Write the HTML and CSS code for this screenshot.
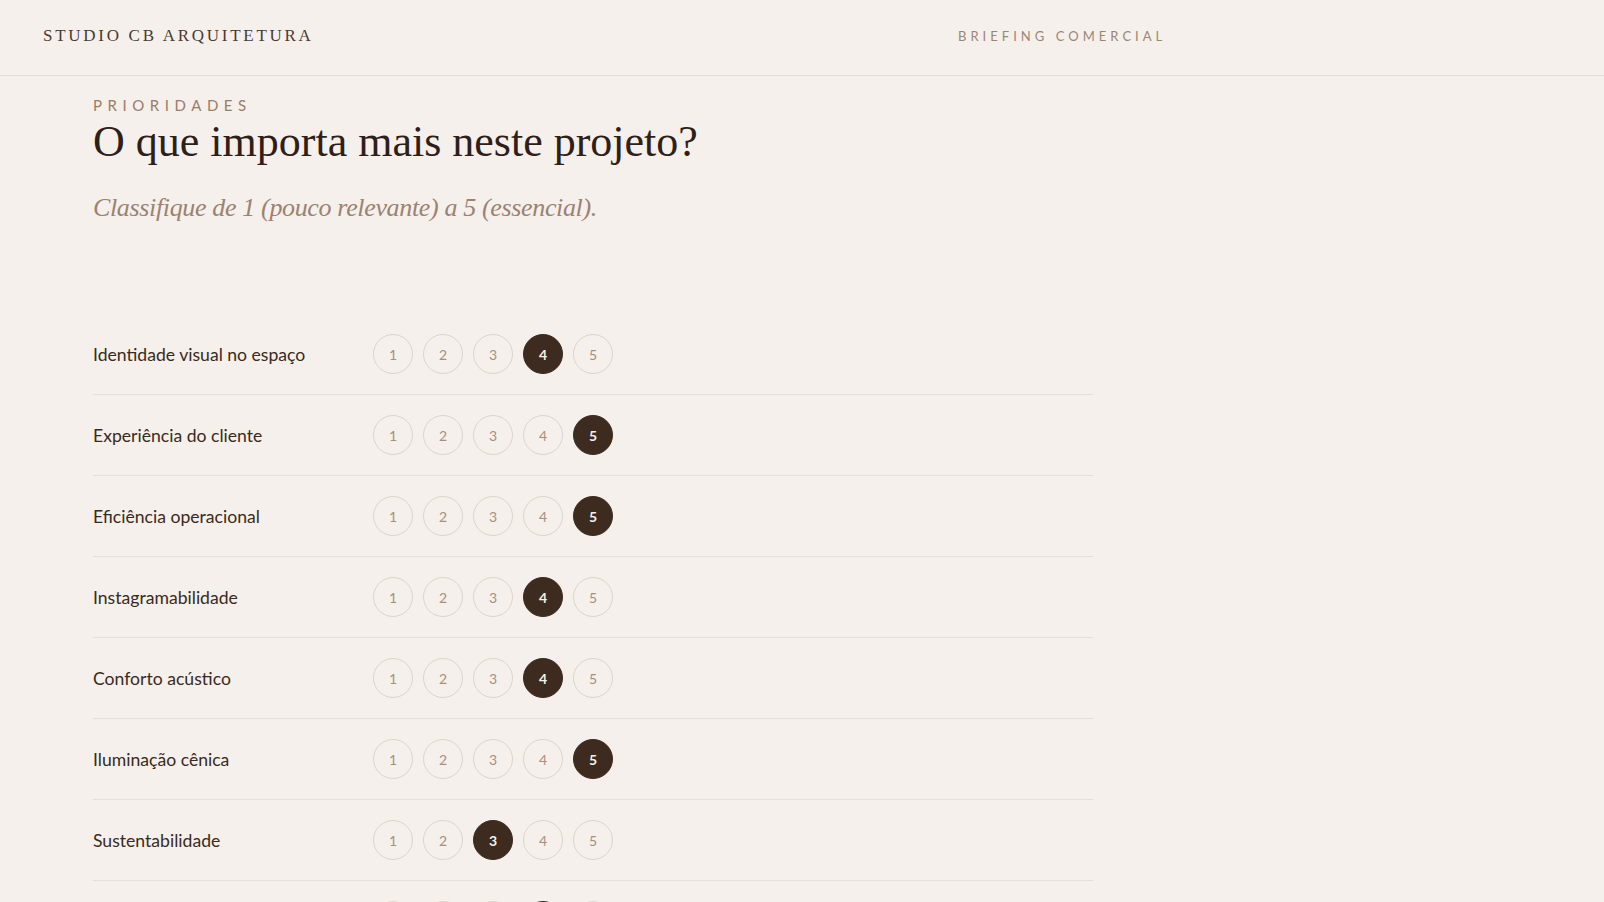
FILE: index.html
```html
<!DOCTYPE html>
<html lang="pt">
<head>
<meta charset="utf-8">
<title>Studio CB Arquitetura — Briefing</title>
<link rel="stylesheet" href="styles.css">
</head>
<body>
<header class="topbar">
  <div class="brand">STUDIO CB ARQUITETURA</div>
  <div class="doc-type">BRIEFING COMERCIAL</div>
  <div class="spacer"></div>
</header>
<main class="content">
  <section class="intro">
    <div class="eyebrow">PRIORIDADES</div>
    <h1 class="title">O que importa mais neste projeto?</h1>
    <p class="lead">Classifique de 1 (pouco relevante) a 5 (essencial).</p>
  </section>
  <section class="ratings">
    <div class="row"><span class="label">Identidade visual no espaço</span><div class="scale"><span class="dot">1</span><span class="dot">2</span><span class="dot">3</span><span class="dot on">4</span><span class="dot">5</span></div></div>
    <div class="row"><span class="label">Experiência do cliente</span><div class="scale"><span class="dot">1</span><span class="dot">2</span><span class="dot">3</span><span class="dot">4</span><span class="dot on">5</span></div></div>
    <div class="row"><span class="label">Eficiência operacional</span><div class="scale"><span class="dot">1</span><span class="dot">2</span><span class="dot">3</span><span class="dot">4</span><span class="dot on">5</span></div></div>
    <div class="row"><span class="label">Instagramabilidade</span><div class="scale"><span class="dot">1</span><span class="dot">2</span><span class="dot">3</span><span class="dot on">4</span><span class="dot">5</span></div></div>
    <div class="row"><span class="label">Conforto acústico</span><div class="scale"><span class="dot">1</span><span class="dot">2</span><span class="dot">3</span><span class="dot on">4</span><span class="dot">5</span></div></div>
    <div class="row"><span class="label">Iluminação cênica</span><div class="scale"><span class="dot">1</span><span class="dot">2</span><span class="dot">3</span><span class="dot">4</span><span class="dot on">5</span></div></div>
    <div class="row"><span class="label">Sustentabilidade</span><div class="scale"><span class="dot">1</span><span class="dot">2</span><span class="dot on">3</span><span class="dot">4</span><span class="dot">5</span></div></div>
    <div class="row"><span class="label">Flexibilidade de uso</span><div class="scale"><span class="dot">1</span><span class="dot">2</span><span class="dot">3</span><span class="dot on">4</span><span class="dot">5</span></div></div>
  </section>
</main>
</body>
</html>
```
FILE: styles.css
```css
* { box-sizing: border-box; }
html, body { margin: 0; padding: 0; }
body {
  background: #f5f0eb;
  color: #3a2a20;
  font-family: Lato, "Noto Sans", sans-serif;
  overflow: hidden;
  height: 902px;
}
.topbar {
  display: flex;
  align-items: center;
  height: 76px;
  padding: 0 43px 3px;
  border-bottom: 1px solid #e4ddd6;
}
.brand {
  font-family: "Liberation Serif", serif;
  font-size: 17px;
  letter-spacing: 0.16em;
  color: #4a3a30;
  width: 915px;
}
.doc-type {
  font-family: Lato, sans-serif;
  font-size: 13px;
  letter-spacing: 0.31em;
  color: #9c8676;
}
.spacer { flex: 1; }
.content {
  padding: 0 0 0 93px;
  width: 1093px;
}
.intro { padding-top: 20px; }
.eyebrow {
  font-size: 15px;
  letter-spacing: 0.37em;
  color: #9b7d66;
  line-height: 18px;
}
.title {
  margin: 2px 0 0;
  font-family: "Liberation Serif", serif;
  font-weight: 400;
  font-size: 44px;
  line-height: 52px;
  color: #2e2018;
}
.lead {
  margin: 20px 0 0;
  font-family: "Liberation Serif", serif;
  font-style: italic;
  font-size: 26px;
  letter-spacing: -0.35px;
  line-height: 40px;
  color: #9c8270;
}
.ratings { margin-top: 86px; }
.row {
  display: flex;
  align-items: center;
  padding: 20px 0;
  border-bottom: 1px solid #e6dfd8;
}
.label {
  width: 280px;
  font-size: 17.6px;
  color: #3a2a20;
}
.scale { display: flex; gap: 10px; }
.dot {
  width: 40px;
  height: 40px;
  border-radius: 50%;
  border: 1px solid #ddd4cc;
  display: flex;
  align-items: center;
  justify-content: center;
  font-size: 14px;
  font-weight: 400;
  color: #a88f7c;
}
.dot.on {
  background: #3d2b1f;
  border-color: #3d2b1f;
  color: #f5efe8;
  font-weight: 700;
}
```
